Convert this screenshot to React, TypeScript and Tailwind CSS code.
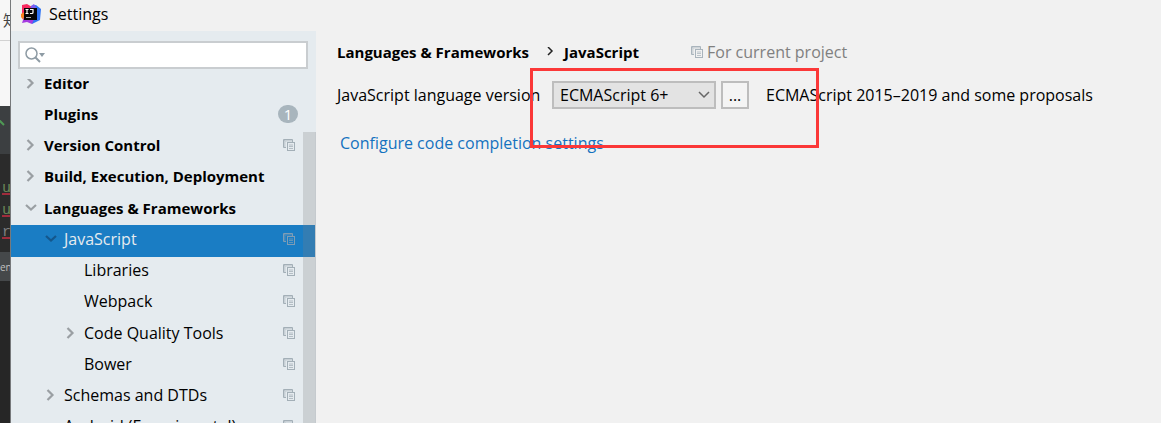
import React from "react";

function Chevron({ open }: { open?: boolean }) {
  return (
    <svg width="12" height="12" viewBox="0 0 12 12" className="shrink-0" fill="none" stroke="currentColor" strokeWidth="2.2" aria-hidden="true">
      {open ? <path d="M1 3l5 4.500 5-4.500" /> : <path d="M2.500 1l5 5-5 5" />}
    </svg>
  );
}

function ProjectIcon({ className = "" }: { className?: string }) {
  return (
    <svg width="12" height="12" viewBox="0 0 12 12" className={`shrink-0 ${className}`} fill="none" stroke="currentColor" aria-hidden="true">
      <path d="M3 8.500H.5V.5h9V3" />
      <path d="M1 1.500h8M1.500 1v7" opacity=".45" />
      <path d="M2 2.500h8M2.500 2v6" opacity=".25" />
      <rect x="4.500" y="3.500" width="7" height="8" />
      <path d="M6 6h4M6 7.500h4M6 9.500h4" opacity=".75" />
    </svg>
  );
}

function Logo() {
  return (
    <svg width="20" height="20" viewBox="0 0 20 20" aria-hidden="true">
      <path d="M1 1 6 0l5 3-3 7-7 1z" fill="#f8295f" />
      <path d="M0 10l5-3 2 9-4 1-3-4z" fill="#fc801d" />
      <path d="M10 2l5-1 5 4-1 11-8 4z" fill="#2f74f5" />
      <path d="M10 2l3-2 3 5h-7z" fill="#7b5cf0" />
      <path d="M1 19l2-6 10 2-2 5-5-2z" fill="#a53be0" />
      <path d="M3 4h13v12H3z" fill="#050505" />
      <path d="M4.500 5.500h3M6 5.500v4M4.500 9.500h3M9 5.500h3v3q0 1-1 1H9" fill="none" stroke="#fff" strokeWidth="1.200" />
      <path d="M5 13.500h5" stroke="#aaa" />
    </svg>
  );
}

type Item = { label: string; pad: string; bold?: boolean; arrow?: "open" | "closed"; project?: boolean; count?: number; selected?: boolean };

const items: Item[] = [
  { label: "Editor", pad: "pl-3.5", bold: true, arrow: "closed" },
  { label: "Plugins", pad: "pl-3.5", bold: true, count: 1 },
  { label: "Version Control", pad: "pl-3.5", bold: true, arrow: "closed", project: true },
  { label: "Build, Execution, Deployment", pad: "pl-3.5", bold: true, arrow: "closed" },
  { label: "Languages & Frameworks", pad: "pl-3.5", bold: true, arrow: "open" },
  { label: "JavaScript", pad: "pl-[34px]", arrow: "open", project: true, selected: true },
  { label: "Libraries", pad: "pl-[54px]", project: true },
  { label: "Webpack", pad: "pl-[54px]", project: true },
  { label: "Code Quality Tools", pad: "pl-[54px]", arrow: "closed", project: true },
  { label: "Bower", pad: "pl-[54px]", project: true },
  { label: "Schemas and DTDs", pad: "pl-[34px]", arrow: "closed", project: true },
  { label: "Android (Experimental)", pad: "pl-[34px]", project: true },
];

function Row({ item }: { item: Item }) {
  return (
    <li
      role="treeitem"
      aria-selected={!!item.selected}
      className={`flex flex-1 items-center pr-[21px] pb-1 ${item.pad} ${item.selected ? "bg-[#1a7dc4] text-[#e6ebef]" : ""} ${item.bold ? "text-[15px] font-bold" : ""}`}
    >
      <span className={`flex w-[19px] shrink-0 ${item.selected ? "text-[#14578c]" : "text-[#9a9fa3]"}`}>
        {item.arrow && <Chevron open={item.arrow === "open"} />}
      </span>
      <span className="flex-1 whitespace-nowrap">{item.label}</span>
      {item.project && <ProjectIcon className={item.selected ? "text-[#7f9db5]" : "text-[#a3afb7]"} />}
      {item.count && (
        <span className="-mr-[3px] flex h-[18px] w-5 items-center justify-center rounded-full bg-[#a8b5bd] text-[15px] font-normal text-white">{item.count}</span>
      )}
    </li>
  );
}

function Backdrop() {
  return (
    <div className="flex w-[11px] shrink-0 flex-col overflow-hidden border-r border-[#77797b] bg-[#262626] text-[15px]">
      <div className="flex h-[41px] shrink-0 items-center border-b border-[#d2d2d2] bg-[#f7f7f7] pl-[3px] text-[#444]">知</div>
      <div className="h-[65px] shrink-0 bg-[#f7f7f7]" />
      <div className="h-12 shrink-0 bg-[#3c3f41] pt-2">
        <svg width="10" height="18" viewBox="0 0 10 18" fill="none" stroke="#4f9a55" strokeWidth="2" aria-hidden="true"><path d="M-2 5l6 6" /></svg>
      </div>
      <div className="flex h-[90px] shrink-0 flex-col justify-end bg-[#2b2b2b] pl-0.5 font-['Liberation_Mono'] leading-[22px]">
        <span className="text-[#6a8759] underline decoration-[#a02c3c] decoration-2">u</span>
        <span className="text-[#6a8759] underline decoration-[#a02c3c] decoration-2">u</span>
        <span className="text-[#7d7f80] underline decoration-[#a02c3c] decoration-2">r</span>
      </div>
      <div className="h-2 shrink-0 bg-[#2b2b2b]" />
      <div className="flex h-[29px] shrink-0 items-center bg-[#45484a] text-[10px] text-[#c0c0c0]">en</div>
    </div>
  );
}

export default function App() {
  return (
    <div className="flex h-screen overflow-hidden bg-[#f1f1f1] font-['Open_Sans','Noto_Sans_CJK_SC',sans-serif] text-base leading-5 text-black">
      <Backdrop />
      <div className="flex min-w-0 flex-1 flex-col">
        <header className="flex h-[31px] shrink-0 items-center gap-2 pb-[3px] pl-[10px]">
          <Logo />
          <h1>Settings</h1>
        </header>
        <div className="flex min-h-0 flex-1">
          <aside className="relative flex w-[305px] shrink-0 flex-col overflow-hidden bg-[#e5ebef]">
            <div className="z-10 h-12 shrink-0 bg-[#e5ebef] pt-[10px] pr-2 pl-[7px]">
              <label className="flex h-7 items-center border-2 border-[#c9cdd0] bg-white pl-[5px]">
                <svg width="21" height="16" viewBox="0 0 21 16" fill="none" stroke="#8e9ba4" strokeWidth="1.500" aria-hidden="true">
                  <circle cx="6.500" cy="6.500" r="5.500" />
                  <path d="M10.500 10.500l4.500 4.500" strokeWidth="2" />
                  <path d="M14 6h6l-3 4z" fill="#8e9ba4" stroke="none" />
                </svg>
                <input type="text" aria-label="Search settings" className="min-w-0 flex-1 bg-transparent outline-none" />
              </label>
            </div>
            <ul role="tree" className="-mt-[10px] flex h-[375px] shrink-0 flex-col">
              {items.map((item) => <Row key={item.label} item={item} />)}
            </ul>
            <div className="absolute top-[101px] right-0 bottom-0 w-[13px] border-r border-[#c5cace] bg-[#808080]/25" />
          </aside>
          <main className="min-w-0 flex-1 pt-[11px] pl-[21px]">
            <nav className="flex h-5 items-center whitespace-nowrap text-[15px] font-bold">
              <a href="#languages">Languages &amp; Frameworks</a>
              <svg width="35" height="10" viewBox="0 0 35 10" fill="none" stroke="#222" strokeWidth="1.500" aria-hidden="true"><path d="M19 0l4 4-4 4" /></svg>
              <span>JavaScript</span>
              <span className="ml-[52px] flex items-center gap-1 text-base leading-5 font-normal text-[#808080]">
                <ProjectIcon className="text-[#a9b4bc]" />
                For current project
              </span>
            </nav>
            <div className="mt-[19px] flex h-7 items-center whitespace-nowrap">
              <label htmlFor="version" className="w-[215px]">JavaScript language version</label>
              <div className="relative">
                <select id="version" className="h-7 w-[164px] appearance-none border-2 border-[#bdbdbd] bg-[#e3e3e3] pl-1.5">
                  <option>ECMAScript 6+</option>
                </select>
                <svg width="12" height="8" viewBox="0 0 12 8" className="pointer-events-none absolute top-[10px] right-[6px]" fill="none" stroke="#666" strokeWidth="1.500" aria-hidden="true"><path d="M1 1l5 5 5-5" /></svg>
                <div className="pointer-events-none absolute -top-[13px] -left-[22px] h-20 w-[289px] border-[3px] border-[#fb3838]" />
              </div>
              <button type="button" className="ml-[5px] h-7 w-7 border-2 border-[#bdbdbd] bg-[#f4f4f4]">...</button>
              <span className="ml-[17px]">ECMAScript 2015–2019 and some proposals</span>
            </div>
            <a href="#completion" className="mt-6 ml-[3px] block w-fit text-[#1472bf]">Configure code completion settings</a>
          </main>
        </div>
      </div>
    </div>
  );
}
